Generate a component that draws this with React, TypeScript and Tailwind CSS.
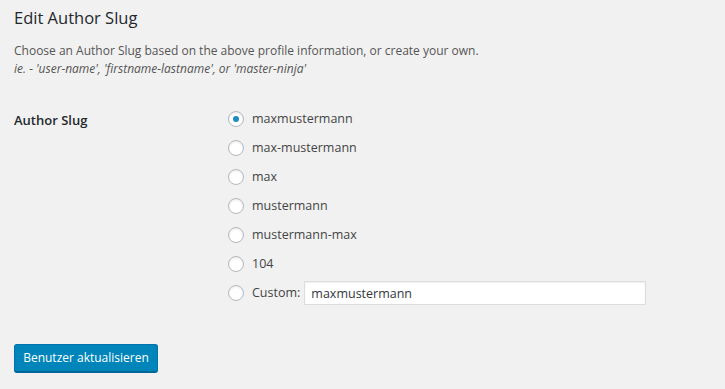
import React from "react"

const options = ["maxmustermann", "max-mustermann", "max", "mustermann", "mustermann-max", "104"]

const Radio = ({ checked }: { checked?: boolean }) => (
  <span className="w-4 h-4 rounded-full border border-[#b4b9be] bg-white shadow-[inset_0_1px_2px_rgba(0,0,0,0.1)] flex items-center justify-center shrink-0">
    {checked && <span className="w-1.5 h-1.5 rounded-full bg-[#1e8cbe]" />}
  </span>
)

export default function App() {
  return (
    <div className="w-[725px] h-[389px] bg-[#f1f1f1] px-[14px] pt-[6px] font-['Segoe_UI','Open_Sans',sans-serif] text-[#444]">
      <h2 className="text-[16.5px] leading-[24px] font-normal text-[#23282d]">Edit Author Slug</h2>
      <div className="mt-[12px] text-[12px] leading-[18px] text-[#555]">
        <p>Choose an Author Slug based on the above profile information, or create your own.</p>
        <p className="italic">ie. - 'user-name', 'firstname-lastname', or 'master-ninja'</p>
      </div>
      <div className="flex mt-[31px]">
        <div className="w-[214px] text-[13px] font-semibold text-[#23282d] leading-[20px] pt-[1px]">Author Slug</div>
        <div className="flex flex-col gap-[9px]">
          {options.map((o, i) => (
            <label key={o} className="flex items-center gap-[8px] h-[20px] text-[12.5px] text-[#444]">
              <Radio checked={i === 0} />
              <span>{o}</span>
            </label>
          ))}
          <label className="flex items-center h-[20px] text-[12.5px] text-[#444]">
            <Radio />
            <span className="ml-[8px]">Custom:</span>
            <input
              readOnly
              value="maxmustermann"
              className="ml-[4px] w-[342px] h-[24px] bg-white border border-[#ddd] shadow-[inset_0_1px_2px_rgba(0,0,0,0.07)] px-[6px] text-[12.5px] text-[#32373c] outline-none"
            />
          </label>
        </div>
      </div>
      <button className="mt-[41px] w-[144px] h-[28px] rounded-[3px] bg-[#0085ba] border border-[#0073aa] border-b-[#006799] shadow-[0_1px_0_#006799] text-white text-[12px] leading-[26px]">
        Benutzer aktualisieren
      </button>
    </div>
  )
}
